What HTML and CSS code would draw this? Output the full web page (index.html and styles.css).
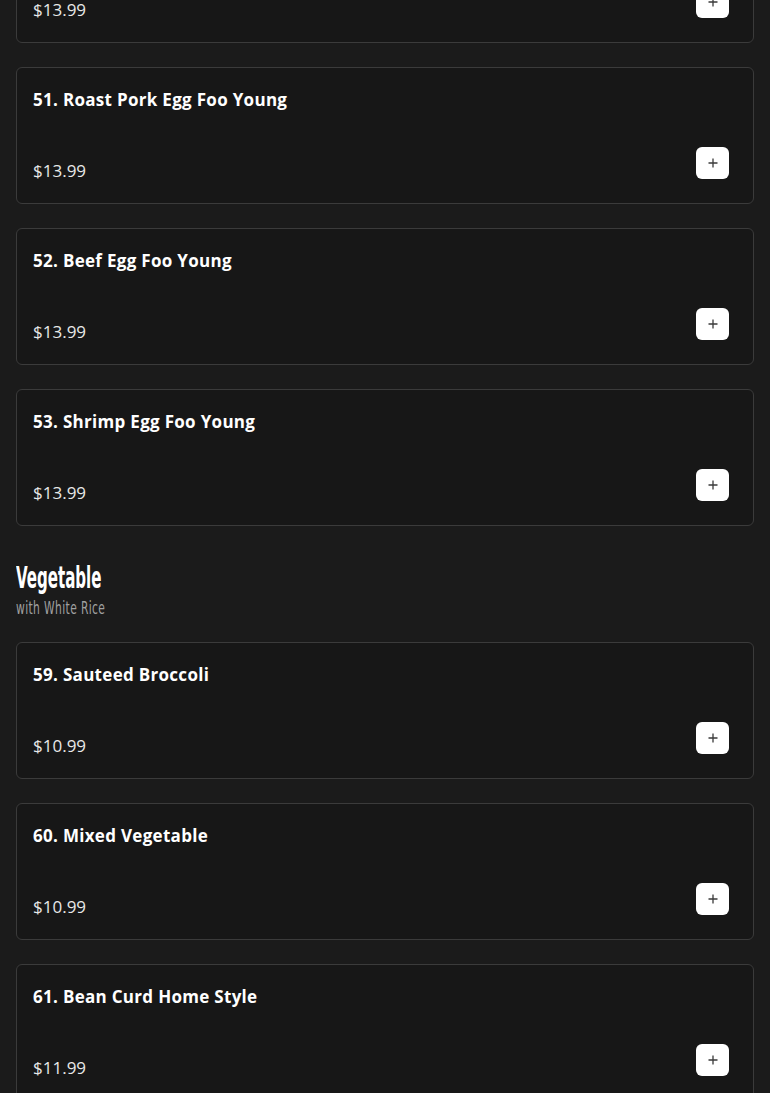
FILE: index.html
```html
<!DOCTYPE html>
<html lang="en">
<head>
  <meta charset="UTF-8">
  <meta name="viewport" content="width=device-width, initial-scale=1">
  <title>Menu</title>
  <link rel="stylesheet" href="styles.css">
</head>
<body>
  <div class="menu">
    <section class="category category-cut">
      <div class="item">
        <h3 class="item-name">50. Chicken Egg Foo Young</h3>
        <div class="item-foot">
          <span class="price">$13.99</span>
          <button class="add" type="button" aria-label="Add"><svg viewBox="0 0 10 10"><path d="M5 0.5v9M0.5 5h9"/></svg></button>
        </div>
      </div>
      <div class="item">
        <h3 class="item-name">51. Roast Pork Egg Foo Young</h3>
        <div class="item-foot">
          <span class="price">$13.99</span>
          <button class="add" type="button" aria-label="Add"><svg viewBox="0 0 10 10"><path d="M5 0.5v9M0.5 5h9"/></svg></button>
        </div>
      </div>
      <div class="item">
        <h3 class="item-name">52. Beef Egg Foo Young</h3>
        <div class="item-foot">
          <span class="price">$13.99</span>
          <button class="add" type="button" aria-label="Add"><svg viewBox="0 0 10 10"><path d="M5 0.5v9M0.5 5h9"/></svg></button>
        </div>
      </div>
      <div class="item">
        <h3 class="item-name">53. Shrimp Egg Foo Young</h3>
        <div class="item-foot">
          <span class="price">$13.99</span>
          <button class="add" type="button" aria-label="Add"><svg viewBox="0 0 10 10"><path d="M5 0.5v9M0.5 5h9"/></svg></button>
        </div>
      </div>
    </section>

    <section class="category">
      <div class="category-head">
        <h2 class="category-title">Vegetable</h2>
        <p class="category-note">with White Rice</p>
      </div>
      <div class="item">
        <h3 class="item-name">59. Sauteed Broccoli</h3>
        <div class="item-foot">
          <span class="price">$10.99</span>
          <button class="add" type="button" aria-label="Add"><svg viewBox="0 0 10 10"><path d="M5 0.5v9M0.5 5h9"/></svg></button>
        </div>
      </div>
      <div class="item">
        <h3 class="item-name">60. Mixed Vegetable</h3>
        <div class="item-foot">
          <span class="price">$10.99</span>
          <button class="add" type="button" aria-label="Add"><svg viewBox="0 0 10 10"><path d="M5 0.5v9M0.5 5h9"/></svg></button>
        </div>
      </div>
      <div class="item">
        <h3 class="item-name">61. Bean Curd Home Style</h3>
        <div class="item-foot">
          <span class="price">$11.99</span>
          <button class="add" type="button" aria-label="Add"><svg viewBox="0 0 10 10"><path d="M5 0.5v9M0.5 5h9"/></svg></button>
        </div>
      </div>
    </section>
  </div>
</body>
</html>
```

FILE: styles.css
```css
* {
  box-sizing: border-box;
}

html,
body {
  margin: 0;
  padding: 0;
  background-color: #1b1b1b;
  color: #ffffff;
  font-family: "Open Sans", "Liberation Sans", sans-serif;
}

body {
  height: 1093px;
  overflow: hidden;
}

.menu {
  padding: 0 16px;
}

.category {
  display: flex;
  flex-direction: column;
  gap: 24px;
}

.category-cut {
  margin-top: -94px;
}

.category-head {
  margin-top: 31px;
}

/* condensed display face, squeezed to match the narrow heading */
.category-title {
  margin: 0;
  font-family: "DejaVu Sans Condensed", "DejaVu Sans", sans-serif;
  font-size: 31px;
  font-weight: 700;
  line-height: 41px;
  transform: scaleX(0.54);
  transform-origin: left;
  white-space: nowrap;
}

.category-note {
  margin: 0;
  font-family: "DejaVu Sans Condensed", "DejaVu Sans", sans-serif;
  font-size: 18px;
  line-height: 20px;
  color: #a0a0a0;
  letter-spacing: 0.6px;
  transform: scaleX(0.66);
  transform-origin: left;
  white-space: nowrap;
}

.item {
  display: flex;
  flex-direction: column;
  gap: 35px;
  padding: 20px 24px 24px 16px;
  background-color: #171717;
  border: 1px solid #3b3b3b;
  border-radius: 6px;
}

.item-name {
  margin: 0;
  font-size: 17px;
  font-weight: 700;
  line-height: 24px;
  letter-spacing: 0.3px;
}

.item-foot {
  display: flex;
  justify-content: space-between;
  align-items: flex-end;
}

.price {
  font-size: 17px;
  line-height: 20px;
  color: #e8e8e8;
  margin-bottom: -2px;
}

.add {
  display: flex;
  align-items: center;
  justify-content: center;
  width: 33px;
  height: 32px;
  padding: 0;
  border: none;
  border-radius: 6px;
  background-color: #ffffff;
  cursor: pointer;
}

.add svg {
  width: 10px;
  height: 10px;
  fill: none;
  stroke: #3a3a3a;
  stroke-width: 1.3;
}
```
